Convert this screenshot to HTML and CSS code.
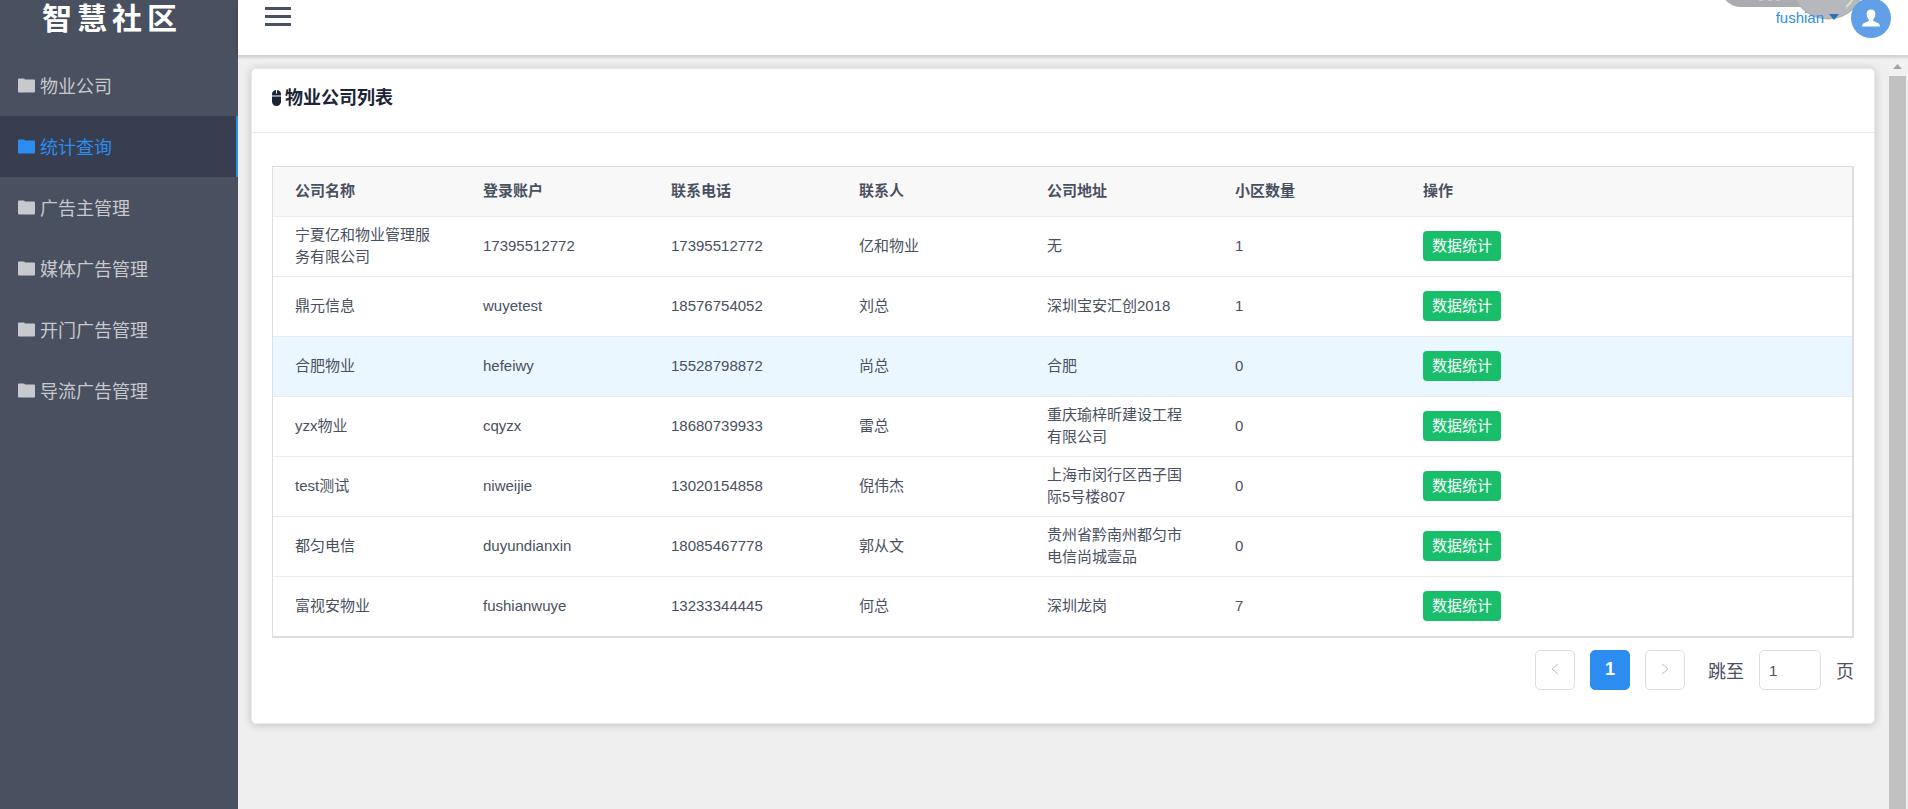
FILE: index.html
```html
<!DOCTYPE html>
<html lang="zh-CN">
<head>
<meta charset="utf-8">
<title>智慧社区</title>
<link rel="stylesheet" href="styles.css">
</head>
<body>
<svg class="defs" aria-hidden="true">
  <symbol id="folder" viewBox="0 -2 17 17"><path d="M0 1.500Q0 0.500 1 0.500H5.500Q6.500 0.500 7 1.500H16Q17 1.500 17 2.500V13.500Q17 14.500 16 14.500H1Q0 14.500 0 13.500Z"/></symbol>
</svg>
<div class="app">
  <aside class="sidebar">
    <h1 class="logo">智慧社区</h1>
    <nav class="menu">
      <a class="menu-item" href="#"><svg class="folder"><use href="#folder"/></svg>物业公司</a>
      <a class="menu-item active" href="#" aria-current="page"><svg class="folder"><use href="#folder"/></svg>统计查询</a>
      <a class="menu-item" href="#"><svg class="folder"><use href="#folder"/></svg>广告主管理</a>
      <a class="menu-item" href="#"><svg class="folder"><use href="#folder"/></svg>媒体广告管理</a>
      <a class="menu-item" href="#"><svg class="folder"><use href="#folder"/></svg>开门广告管理</a>
      <a class="menu-item" href="#"><svg class="folder"><use href="#folder"/></svg>导流广告管理</a>
    </nav>
  </aside>
  <div class="page">
    <header class="topbar">
      <button class="toggle" type="button" aria-label="菜单"><span></span><span></span><span></span></button>
      <svg class="floating" viewBox="0 0 144 20" aria-hidden="true">
        <rect class="float-pill" x="0" y="-36" width="130" height="43" rx="21"/>
        <path class="float-dots" d="M39 0H43M48 0H52M56 0H60"/>
        <circle class="float-ball" cx="108" cy="-18" r="37"/>
        <path class="float-mark" d="M126 7Q131 3 133 -2"/>
      </svg>
      <div class="account">
        <button class="user" type="button">fushian<svg class="caret" viewBox="0 0 10 6"><path d="M0 0H10L5 6Z"/></svg></button>
        <span class="avatar"><svg viewBox="0 0 18 18"><path d="M9 0.500C11.800 0.500 13.400 2.300 13.400 5C13.400 7.200 12.500 9.200 11.300 10.300V12C13 13 18 13.500 18 17.500H0C0 13.500 5 13 6.700 12V10.300C5.500 9.200 4.600 7.200 4.600 5C4.600 2.300 6.200 0.500 9 0.500Z"/></svg></span>
      </div>
    </header>
    <div class="body">
      <main class="content">
        <section class="card">
          <header class="card-head">
            <svg class="mouse" viewBox="0 0 9 16"><path d="M4 0V3.500H5V0Q9 0.500 9 4.500V5.500H0V4.500Q0 0.500 4 0ZM0 6.500H9V11.500A4.500 4.500 0 0 1 0 11.500Z"/></svg>
            <h2 class="card-title">物业公司列表</h2>
          </header>
          <div class="card-body">
            <table class="list">
              <colgroup><col class="col"><col class="col"><col class="col"><col class="col"><col class="col"><col class="col"><col></colgroup>
              <thead><tr><th>公司名称</th><th>登录账户</th><th>联系电话</th><th>联系人</th><th>公司地址</th><th>小区数量</th><th>操作</th></tr></thead>
              <tbody>
                <tr><td>宁夏亿和物业管理服务有限公司</td><td>17395512772</td><td>17395512772</td><td>亿和物业</td><td>无</td><td>1</td><td><button class="stat" type="button">数据统计</button></td></tr>
                <tr><td>鼎元信息</td><td>wuyetest</td><td>18576754052</td><td>刘总</td><td>深圳宝安汇创2018</td><td>1</td><td><button class="stat" type="button">数据统计</button></td></tr>
                <tr class="hovered"><td>合肥物业</td><td>hefeiwy</td><td>15528798872</td><td>尚总</td><td>合肥</td><td>0</td><td><button class="stat" type="button">数据统计</button></td></tr>
                <tr><td>yzx物业</td><td>cqyzx</td><td>18680739933</td><td>雷总</td><td>重庆瑜梓昕建设工程有限公司</td><td>0</td><td><button class="stat" type="button">数据统计</button></td></tr>
                <tr><td>test测试</td><td>niweijie</td><td>13020154858</td><td>倪伟杰</td><td>上海市闵行区西子国际5号楼807</td><td>0</td><td><button class="stat" type="button">数据统计</button></td></tr>
                <tr><td>都匀电信</td><td>duyundianxin</td><td>18085467778</td><td>郭从文</td><td>贵州省黔南州都匀市电信尚城壹品</td><td>0</td><td><button class="stat" type="button">数据统计</button></td></tr>
                <tr><td>富视安物业</td><td>fushianwuye</td><td>13233344445</td><td>何总</td><td>深圳龙岗</td><td>7</td><td><button class="stat" type="button">数据统计</button></td></tr>
              </tbody>
            </table>
            <nav class="pager" aria-label="分页">
              <button class="pg" type="button" aria-label="上一页"><svg viewBox="0 0 8 12"><path d="M7 1L1 6L7 11"/></svg></button>
              <button class="pg current" type="button" aria-current="page">1</button>
              <button class="pg" type="button" aria-label="下一页"><svg viewBox="0 0 8 12"><path d="M1 1L7 6L1 11"/></svg></button>
              <label class="jump">跳至<input class="jump-input" type="text" value="1">页</label>
            </nav>
          </div>
        </section>
      </main>
      <div class="scrollbar" aria-hidden="true">
        <svg class="scroll-up" viewBox="0 0 9 5"><path d="M0 5L4.500 0L9 5Z"/></svg>
        <div class="scroll-thumb"></div>
      </div>
    </div>
  </div>
</div>
</body>
</html>
```
FILE: styles.css
```css
* { box-sizing: border-box; }

body {
  margin: 0;
  font-family: "Liberation Sans", "Noto Sans CJK SC", sans-serif;
  font-size: 15px;
  color: #495060;
  background: #efefef;
}

button, input { font: inherit; color: inherit; }
button { border: 0; padding: 0; background: none; cursor: pointer; }

.defs { display: none; }

.app { display: flex; height: 100vh; overflow: hidden; }

/* Sidebar */
.sidebar { flex: 0 0 238px; background: #495060; }

.logo {
  height: 55px;
  margin: 0;
  padding-left: 42px;
  font-size: 30px;
  line-height: 38px;
  letter-spacing: 5px;
  color: #fff;
}

.menu-item {
  display: flex;
  align-items: center;
  gap: 5px;
  height: 61px;
  padding: 0 0 2px 18px;
  border-right: 2px solid transparent;
  font-size: 18px;
  color: #c8c9cd;
  text-decoration: none;
}
.menu-item.active {
  background: #363e4f;
  border-color: #2d8cf0;
  color: #2d8cf0;
}
.folder { width: 17px; height: 17px; fill: currentColor; }

/* Top bar */
.page { flex: 1; min-width: 0; display: flex; flex-direction: column; }

.topbar {
  position: relative;
  z-index: 1;
  display: flex;
  justify-content: space-between;
  align-items: flex-start;
  height: 55px;
  padding: 0 17px 0 27px;
  background: #fff;
  box-shadow: 0 2px 2px 1px rgba(0, 0, 0, 0.12);
}

.toggle { display: grid; gap: 5px; width: 26px; padding-top: 7px; }
.toggle span { height: 3px; background: #495060; }

.account {
  position: relative;
  display: flex;
  align-items: center;
  gap: 12px;
  height: 36px;
}
.user { display: flex; align-items: center; gap: 5px; padding-bottom: 2px; color: #2d8cf0; }
.caret { width: 10px; height: 6px; fill: #2d6fb8; }
.avatar {
  display: grid;
  place-items: center;
  width: 40px;
  height: 40px;
  border-radius: 50%;
  background: #619fe7;
}
.avatar svg { width: 18px; height: 18px; fill: #fff; }

.floating {
  position: absolute;
  top: 0;
  right: 44px;
  width: 144px;
  height: 20px;
  pointer-events: none;
}
.float-pill { fill: #aaabaf; }
.float-dots { stroke: #c6c7ca; stroke-width: 2; }
.float-ball { fill: #b7b8bd; stroke: #a8a9ad; }
.float-mark { fill: none; stroke: #d5e8c4; stroke-width: 2; }

/* Content */
.body { flex: 1; min-height: 0; display: flex; }
.content { flex: 1; min-width: 0; padding: 13px 14px 0 13px; }

.card {
  border: 1px solid #e9eaec;
  border-radius: 5px;
  background: #fff;
  box-shadow: 0 1px 8px rgba(0, 0, 0, 0.2);
}
.card-head {
  display: flex;
  align-items: center;
  gap: 4px;
  height: 64px;
  padding: 0 20px 5px;
  border-bottom: 1px solid #e9eaec;
}
.mouse { width: 9px; height: 16px; fill: #1c2438; }
.card-title { margin: 0; font-size: 18px; line-height: 24px; color: #1c2438; }
.card-body { padding: 33px 20px; }

.list {
  width: 100%;
  table-layout: fixed;
  border-collapse: separate;
  border-spacing: 0;
  border: solid #dddee1;
  border-width: 1px 2px 2px 1px;
}
.col { width: 188px; }
.list th, .list td {
  padding: 0 22px 2px;
  border-bottom: 1px solid #e9eaec;
  text-align: left;
  line-height: 22px;
}
.list th { height: 50px; background: #f8f8f9; }
.list td { height: 60px; padding-bottom: 1px; word-break: break-all; }
.list tbody tr:last-child td { height: 59px; border-bottom: 0; }
.hovered { background: #ebf7ff; }

.stat {
  display: block;
  height: 30px;
  padding: 0 9px 1px;
  border-radius: 4px;
  background: #19be6b;
  color: #fff;
}

/* Pagination */
.pager {
  display: flex;
  justify-content: flex-end;
  gap: 15px;
  padding-top: 12px;
}
.pg {
  display: grid;
  place-items: center;
  width: 40px;
  height: 40px;
  padding-bottom: 2px;
  border: 1px solid #dddee1;
  border-radius: 5px;
  background: #fff;
  font-size: 18px;
}
.pg svg { width: 8px; height: 12px; fill: none; stroke: #bbb; }
.pg.current {
  border-color: #2d8cf0;
  background: #2d8cf0;
  font-weight: bold;
  color: #fff;
}
.jump {
  display: flex;
  align-items: center;
  gap: 15px;
  padding-left: 8px;
  font-size: 18px;
}
.jump-input {
  width: 62px;
  height: 40px;
  padding: 0 9px;
  border: 1px solid #dddee1;
  border-radius: 5px;
  background: #fff;
  font-size: 15px;
}

/* Scroll bar */
.scrollbar {
  flex: 0 0 19px;
  display: flex;
  flex-direction: column;
  padding: 9px 2px 0 0;
  background: #f1f1f1;
}
.scroll-up { width: 9px; height: 5px; margin: 0 auto 7px; fill: #a3a3a3; }
.scroll-thumb { flex: 1; background: #c1c1c1; }
```
